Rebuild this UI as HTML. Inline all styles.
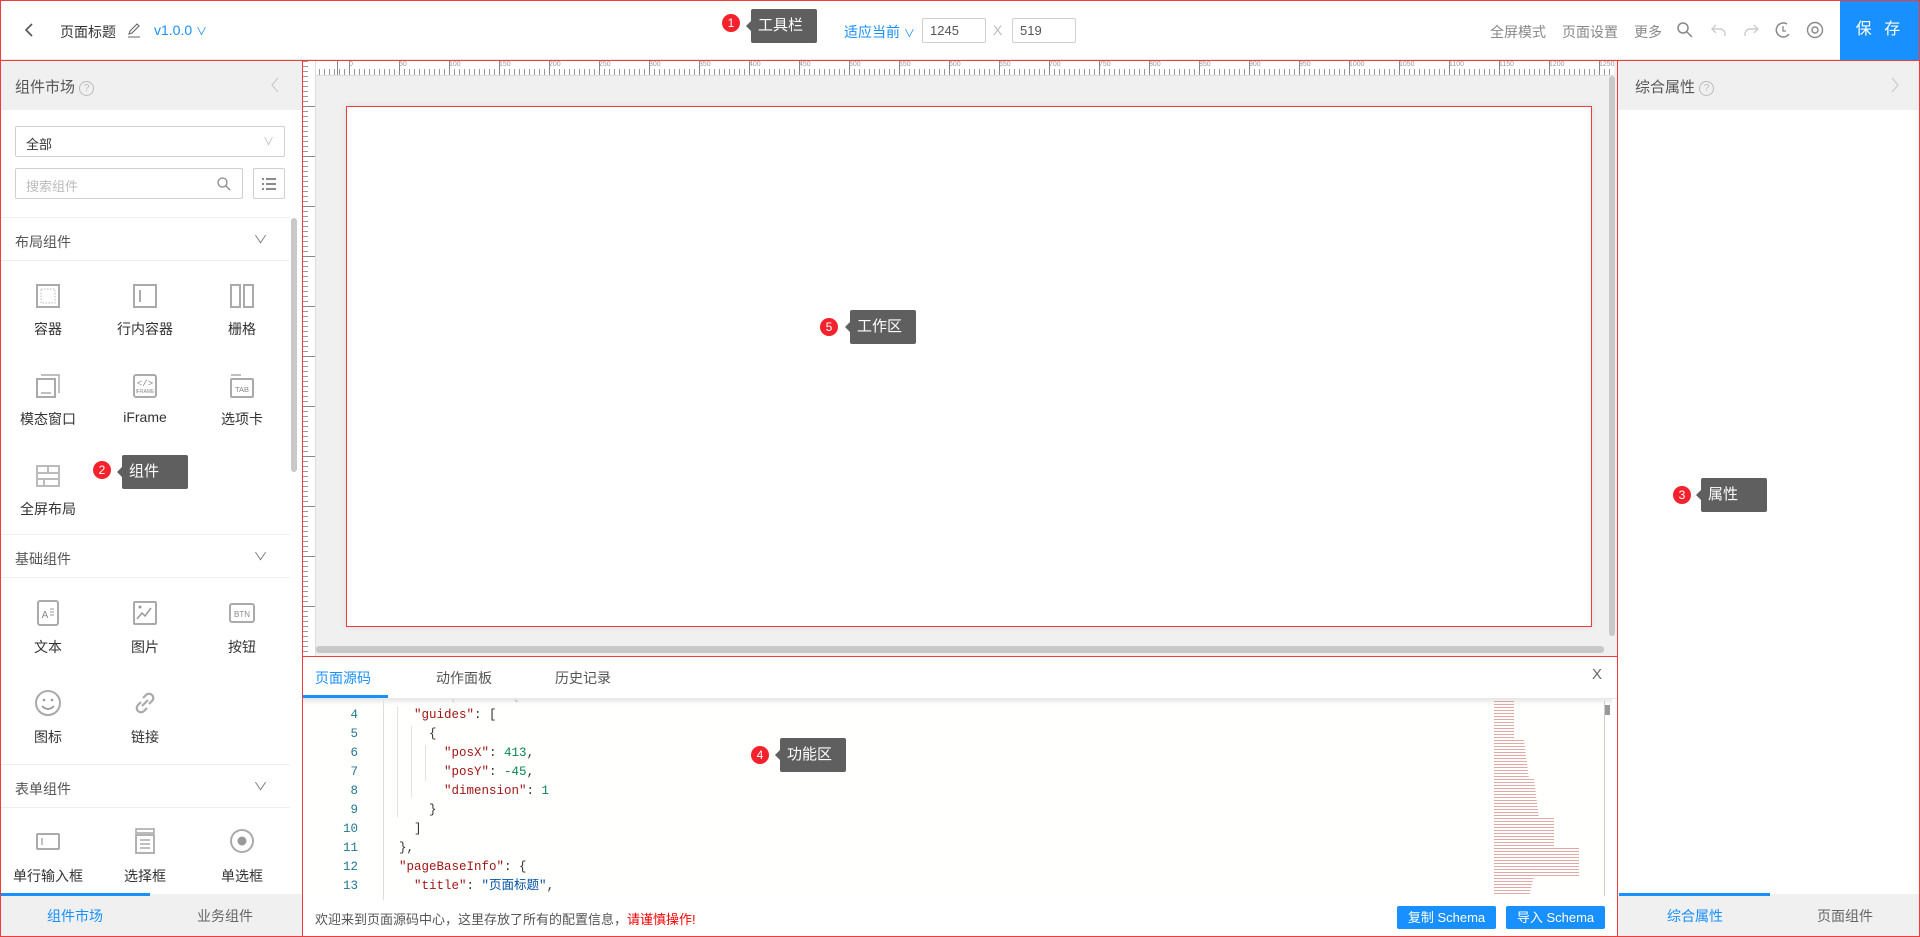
<!DOCTYPE html>
<html><head><meta charset="utf-8"><style>
*{box-sizing:border-box;margin:0;padding:0}
body{width:1920px;height:937px;position:relative;overflow:hidden;background:#fff;font-family:"Liberation Sans","Noto Sans CJK SC",sans-serif;font-size:14px;color:#333}
.a{position:absolute}
.rb{position:absolute;border:1px solid #f03c3c;pointer-events:none;z-index:20}
.blue{color:#1890ff}
.ic{position:absolute;width:28px;height:28px}
.lbl{position:absolute;width:96px;text-align:center;font-size:14px;color:#333}
.sec{position:absolute;left:0;width:290px;height:44px;border-top:1px solid #eee;border-bottom:1px solid #eee;font-size:14px;color:#555;padding:14px 0 0 15px}
.sec span{position:absolute;right:24px;top:13px;color:#777;font-size:11px;transform:scaleX(1.3)}
.tip{position:absolute;background:#5f5f5f;color:#fff;font-size:15px;border-radius:2px;height:34px;line-height:34px;padding-left:7px;width:66px;z-index:25}
.tip:before{content:"";position:absolute;left:-5px;top:12px;border-right:5px solid #5f5f5f;border-top:5px solid transparent;border-bottom:5px solid transparent}
.num{position:absolute;width:18px;height:18px;border-radius:50%;background:#f5222d;color:#fff;font-size:12px;text-align:center;line-height:18px;z-index:25}
.code{position:absolute;font-family:"Liberation Mono",monospace;font-size:12.5px;line-height:19px;white-space:pre}
.ln{position:absolute;width:60px;text-align:right;left:298px;font-family:"Liberation Mono",monospace;font-size:12.5px;color:#237893;line-height:19px}
.k{color:#a31515}.n{color:#098658}.s{color:#0451a5}
.btn{position:absolute;background:#1890ff;color:#fff;font-size:13px;text-align:center;height:23px;line-height:23px;border-radius:2px}
</style></head><body>

<!-- toolbar -->
<div class="a" style="left:0;top:0;width:1920px;height:60px;background:#fff;border-bottom:1px solid #e8e8e8"></div>
<svg class="a" style="left:23px;top:22px" width="12" height="16"><path d="M9 2L3 8l6 6" stroke="#555" stroke-width="1.6" fill="none"/></svg>
<div class="a" style="left:60px;top:22px;font-size:14px;color:#333">页面标题</div>
<svg class="a" style="left:126px;top:22px" width="16" height="16"><path d="M3 12l1-3 7-7 2 2-7 7z M2 15h12" stroke="#666" stroke-width="1.1" fill="none"/></svg>
<div class="a blue" style="left:154px;top:22px;font-size:14px">v1.0.0 <span style="font-size:11px">∨</span></div>
<div class="num" style="left:722px;top:14px">1</div>
<div class="tip" style="left:751px;top:9px">工具栏</div>
<div class="a blue" style="left:844px;top:22px;font-size:14px">适应当前 <span style="font-size:11px">∨</span></div>
<div class="a" style="left:922px;top:18px;width:64px;height:25px;border:1px solid #d0d0d0;border-radius:2px;padding:4px 7px;font-size:13px;color:#555">1245</div>
<div class="a" style="left:993px;top:22px;color:#bbb;font-size:14px">X</div>
<div class="a" style="left:1012px;top:18px;width:64px;height:25px;border:1px solid #d0d0d0;border-radius:2px;padding:4px 7px;font-size:13px;color:#555">519</div>
<div class="a" style="left:1490px;top:22px;color:#888;font-size:14px">全屏模式</div>
<div class="a" style="left:1562px;top:22px;color:#888;font-size:14px">页面设置</div>
<div class="a" style="left:1634px;top:22px;color:#888;font-size:14px">更多</div>
<svg class="a" style="left:1676px;top:21px" width="18" height="18"><circle cx="7" cy="7" r="5" stroke="#888" stroke-width="1.5" fill="none"/><path d="M11 11l5 5" stroke="#888" stroke-width="1.5"/></svg>
<svg class="a" style="left:1710px;top:21px" width="18" height="18"><path d="M6 4L2 8l4 4M2 8h8a5 5 0 0 1 5 5v2" stroke="#ccc" stroke-width="1.4" fill="none"/></svg>
<svg class="a" style="left:1742px;top:21px" width="18" height="18"><path d="M12 4l4 4-4 4M16 8H8a5 5 0 0 0-5 5v2" stroke="#ccc" stroke-width="1.4" fill="none"/></svg>
<svg class="a" style="left:1774px;top:20px" width="18" height="20"><path d="M13 4A7 7 0 1 0 15 14" stroke="#888" stroke-width="1.5" fill="none"/><path d="M9 6v5h3" stroke="#888" stroke-width="1.3" fill="none"/></svg>
<svg class="a" style="left:1806px;top:21px" width="18" height="18"><circle cx="9" cy="9" r="7.5" stroke="#888" stroke-width="1.4" fill="none"/><circle cx="9" cy="9" r="3" stroke="#888" stroke-width="1.4" fill="none"/></svg>
<div class="a" style="left:1840px;top:0;width:80px;height:60px;background:#1890ff;color:#fff;font-size:16px;text-align:center;line-height:60px;letter-spacing:4px">保 存</div>

<!-- left panel -->
<div class="a" style="left:0;top:60px;width:302px;height:50px;background:#f0f0f0"></div>
<div class="a" style="left:15px;top:76px;font-size:15px;color:#555">组件市场 <span style="display:inline-block;width:15px;height:15px;border:1px solid #bbb;border-radius:50%;font-size:10px;text-align:center;line-height:13px;color:#bbb;vertical-align:1px">?</span></div>
<svg class="a" style="left:270px;top:77px" width="10" height="16"><path d="M8 1L2 8l6 7" stroke="#ccc" stroke-width="1.3" fill="none"/></svg>
<div class="a" style="left:15px;top:126px;width:270px;height:31px;border:1px solid #d0d0d0;border-radius:2px;padding:7px 10px;font-size:13px;color:#333">全部<span style="position:absolute;right:10px;top:6px;color:#bbb;font-size:11px">∨</span></div>
<div class="a" style="left:15px;top:168px;width:228px;height:31px;border:1px solid #d0d0d0;border-radius:2px;padding:7px 10px;font-size:13px;color:#bbb">搜索组件</div>
<svg class="a" style="left:216px;top:176px" width="16" height="16"><circle cx="6.5" cy="6.5" r="4.5" stroke="#888" stroke-width="1.3" fill="none"/><path d="M10 10l4 4" stroke="#888" stroke-width="1.3"/></svg>
<div class="a" style="left:253px;top:168px;width:32px;height:31px;border:1px solid #d0d0d0;border-radius:2px"></div>
<svg class="a" style="left:261px;top:176px" width="16" height="16"><path d="M1 3h2M5 3h10M1 8h2M5 8h10M1 13h2M5 13h10" stroke="#666" stroke-width="1.4"/></svg>

<div class="sec" style="top:217px">布局组件<span>∨</span></div>
<svg class="ic" style="left:34px;top:282px"><rect x="3" y="3" width="22" height="22" stroke="#aaa" stroke-width="2" fill="none"/><rect x="7" y="7" width="14" height="14" stroke="#bbb" stroke-dasharray="1.5 1.5" fill="none"/></svg>
<svg class="ic" style="left:131px;top:282px"><rect x="3" y="3" width="22" height="22" stroke="#aaa" stroke-width="2" fill="none"/><path d="M9 8v12" stroke="#aaa" stroke-width="2"/></svg>
<svg class="ic" style="left:228px;top:282px"><rect x="3" y="3" width="9" height="22" stroke="#aaa" stroke-width="2" fill="none"/><rect x="16" y="3" width="9" height="22" stroke="#aaa" stroke-width="2" fill="none"/></svg>
<div class="lbl" style="left:0;top:319px">容器</div>
<div class="lbl" style="left:97px;top:319px">行内容器</div>
<div class="lbl" style="left:194px;top:319px">栅格</div>
<svg class="ic" style="left:34px;top:372px"><rect x="3" y="7" width="18" height="18" stroke="#aaa" stroke-width="2" fill="none"/><path d="M7 3h18v18" stroke="#aaa" stroke-width="1.5" fill="none"/><path d="M7 21h10" stroke="#aaa" stroke-width="1.5"/></svg>
<svg class="ic" style="left:131px;top:372px"><rect x="3" y="3" width="22" height="22" rx="2" stroke="#aaa" stroke-width="2" fill="none"/><text x="14" y="14" font-size="9" text-anchor="middle" fill="#888" font-family="Liberation Mono">&lt;/&gt;</text><text x="14" y="21" font-size="5" text-anchor="middle" fill="#888" font-family="Liberation Sans">IFRAME</text></svg>
<svg class="ic" style="left:228px;top:372px"><path d="M3 3h10" stroke="#aaa" stroke-width="1.5"/><rect x="3" y="7" width="22" height="18" rx="1" stroke="#aaa" stroke-width="2" fill="none"/><text x="14" y="20" font-size="7.5" text-anchor="middle" fill="#888" font-family="Liberation Sans">TAB</text></svg>
<div class="lbl" style="left:0;top:409px">模态窗口</div>
<div class="lbl" style="left:97px;top:409px">iFrame</div>
<div class="lbl" style="left:194px;top:409px">选项卡</div>
<svg class="ic" style="left:34px;top:462px"><rect x="3" y="4" width="22" height="20" stroke="#bbb" stroke-width="2" fill="none"/><path d="M3 11h22M14 4v7M3 17h22M10 17v7" stroke="#bbb" stroke-width="2"/></svg>
<div class="lbl" style="left:0;top:499px">全屏布局</div>
<div class="num" style="left:93px;top:461px">2</div>
<div class="tip" style="left:122px;top:455px">组件</div>

<div class="sec" style="top:534px">基础组件<span>∨</span></div>
<svg class="ic" style="left:34px;top:599px"><rect x="4" y="2" width="20" height="24" rx="2" stroke="#aaa" stroke-width="2" fill="none"/><text x="11" y="19" font-size="10" text-anchor="middle" fill="#888" font-family="Liberation Sans">A</text><path d="M16 10h4M16 13h4M16 16h4" stroke="#999"/></svg>
<svg class="ic" style="left:131px;top:599px"><rect x="3" y="3" width="22" height="22" rx="1" stroke="#aaa" stroke-width="2" fill="none"/><path d="M6 20l5-6 3 3 6-8" stroke="#999" stroke-width="1.5" fill="none"/><circle cx="9" cy="8" r="1.5" fill="#999"/></svg>
<svg class="ic" style="left:228px;top:599px"><rect x="2" y="5" width="24" height="18" rx="2" stroke="#aaa" stroke-width="2" fill="none"/><text x="14" y="18" font-size="8" text-anchor="middle" fill="#888" font-family="Liberation Sans">BTN</text></svg>
<div class="lbl" style="left:0;top:637px">文本</div>
<div class="lbl" style="left:97px;top:637px">图片</div>
<div class="lbl" style="left:194px;top:637px">按钮</div>
<svg class="ic" style="left:34px;top:689px"><circle cx="14" cy="14" r="12" stroke="#aaa" stroke-width="2" fill="none"/><circle cx="10" cy="11" r="1.3" fill="#999"/><circle cx="18" cy="11" r="1.3" fill="#999"/><path d="M8 17q6 6 12 0" stroke="#999" stroke-width="1.8" fill="none"/></svg>
<svg class="ic" style="left:131px;top:689px"><path d="M12 9l3-3a4 4 0 0 1 6 6l-3 3M16 19l-3 3a4 4 0 0 1-6-6l3-3M11 17l6-6" stroke="#aaa" stroke-width="2.2" fill="none"/></svg>
<div class="lbl" style="left:0;top:727px">图标</div>
<div class="lbl" style="left:97px;top:727px">链接</div>

<div class="sec" style="top:764px">表单组件<span>∨</span></div>
<svg class="ic" style="left:34px;top:827px"><rect x="3" y="7" width="22" height="15" rx="1" stroke="#aaa" stroke-width="2" fill="none"/><path d="M8 11v7" stroke="#aaa" stroke-width="1.5"/></svg>
<svg class="ic" style="left:131px;top:827px"><rect x="5" y="2" width="18" height="4" stroke="#aaa" stroke-width="1.6" fill="none"/><rect x="5" y="8" width="18" height="18" stroke="#aaa" stroke-width="1.8" fill="none"/><path d="M9 13h10M9 17h10M9 21h10" stroke="#aaa" stroke-width="1.5"/></svg>
<svg class="ic" style="left:228px;top:827px"><circle cx="14" cy="14" r="11" stroke="#aaa" stroke-width="2" fill="none"/><circle cx="14" cy="14" r="4.5" fill="#999"/></svg>
<div class="lbl" style="left:0;top:866px">单行输入框</div>
<div class="lbl" style="left:97px;top:866px">选择框</div>
<div class="lbl" style="left:194px;top:866px">单选框</div>

<div class="a" style="left:291px;top:218px;width:6px;height:254px;background:#c8c8c8;border-radius:3px"></div>
<div class="a" style="left:0;top:894px;width:302px;height:43px;background:#f0f0f0"></div>
<div class="a" style="left:0;top:893px;width:150px;height:3px;background:#1890ff"></div>
<div class="a blue" style="left:47px;top:906px;font-size:14px">组件市场</div>
<div class="a" style="left:197px;top:906px;font-size:14px;color:#666">业务组件</div>

<!-- canvas -->
<div class="a" style="left:302px;top:60px;width:1315px;height:596px;background:#f0f0f0"></div>
<div class="a" style="left:302px;top:60px;width:1312px;height:16px;background:#fff;border-bottom:1px solid #ddd;
background-image:repeating-linear-gradient(90deg,#888 0 1px,transparent 1px 50px),repeating-linear-gradient(90deg,#999 0 1px,transparent 1px 5px);
background-size:100% 16px,100% 7px;background-position:47px 0,2px 9px;background-repeat:repeat-x"></div>
<div class="a" style="left:302px;top:60px;width:14px;height:596px;background:#fff;border-right:1px solid #ddd;
background-image:repeating-linear-gradient(180deg,#888 0 1px,transparent 1px 50px),repeating-linear-gradient(180deg,#999 0 1px,transparent 1px 5px);
background-size:14px 100%,6px 100%;background-position:0 46px,0 1px;background-repeat:repeat-y"></div>
<div class="a" style="left:302px;top:60px;width:1314px;height:16px;font-size:7px;color:#999;overflow:hidden;white-space:nowrap">
<span style="position:absolute;left:47px;top:1px">0</span><span style="position:absolute;left:97px;top:1px">50</span><span style="position:absolute;left:147px;top:1px">100</span><span style="position:absolute;left:197px;top:1px">150</span><span style="position:absolute;left:247px;top:1px">200</span><span style="position:absolute;left:297px;top:1px">250</span><span style="position:absolute;left:347px;top:1px">300</span><span style="position:absolute;left:397px;top:1px">350</span><span style="position:absolute;left:447px;top:1px">400</span><span style="position:absolute;left:497px;top:1px">450</span><span style="position:absolute;left:547px;top:1px">500</span><span style="position:absolute;left:597px;top:1px">550</span><span style="position:absolute;left:647px;top:1px">600</span><span style="position:absolute;left:697px;top:1px">650</span><span style="position:absolute;left:747px;top:1px">700</span><span style="position:absolute;left:797px;top:1px">750</span><span style="position:absolute;left:847px;top:1px">800</span><span style="position:absolute;left:897px;top:1px">850</span><span style="position:absolute;left:947px;top:1px">900</span><span style="position:absolute;left:997px;top:1px">950</span><span style="position:absolute;left:1047px;top:1px">1000</span><span style="position:absolute;left:1097px;top:1px">1050</span><span style="position:absolute;left:1147px;top:1px">1100</span><span style="position:absolute;left:1197px;top:1px">1150</span><span style="position:absolute;left:1247px;top:1px">1200</span><span style="position:absolute;left:1297px;top:1px">1250</span></div>
<div class="a" style="left:346px;top:106px;width:1246px;height:521px;background:#fff;border:1px solid #f03c3c;box-shadow:0 0 6px rgba(0,0,0,.08)"></div>
<div class="num" style="left:820px;top:318px">5</div>
<div class="tip" style="left:850px;top:310px">工作区</div>
<div class="a" style="left:1609px;top:76px;width:6px;height:560px;background:#c8c8c8;border-radius:3px"></div>
<div class="a" style="left:316px;top:646px;width:1288px;height:7px;background:#c8c8c8;border-radius:3px"></div>

<!-- bottom panel -->
<div class="a" style="left:302px;top:656px;width:1315px;height:281px;background:#fff"></div>
<div class="a" style="left:302px;top:698px;width:1315px;height:1px;background:#e8e8e8"></div>
<div class="a blue" style="left:315px;top:668px;font-size:14px">页面源码</div>
<div class="a" style="left:302px;top:695px;width:86px;height:3px;background:#1890ff"></div>
<div class="a" style="left:436px;top:668px;font-size:14px;color:#555">动作面板</div>
<div class="a" style="left:555px;top:668px;font-size:14px;color:#555">历史记录</div>
<div class="a" style="left:1592px;top:666px;font-size:15px;color:#666">X</div>
<div class="a" style="left:302px;top:699px;width:1310px;height:201px;background:#fffffe;overflow:hidden">
<div class="a" style="left:81px;top:0;width:1px;height:201px;background:#ddd"></div>
<div class="a" style="left:95px;top:8px;width:1px;height:110px;background:#e3e3e3"></div>
<div class="a" style="left:109px;top:27px;width:1px;height:72px;background:#e3e3e3"></div>
<div class="a" style="left:123px;top:46px;width:1px;height:36px;background:#e3e3e3"></div>
<div class="ln" style="left:-4px;top:-12px">3<br>4<br>5<br>6<br>7<br>8<br>9<br>10<br>11<br>12<br>13</div>
<div class="code" style="left:97px;top:-12px"><span class="k">"developInfo"</span>: {
  <span class="k">"guides"</span>: [
    {
      <span class="k">"posX"</span>: <span class="n">413</span>,
      <span class="k">"posY"</span>: <span class="n">-45</span>,
      <span class="k">"dimension"</span>: <span class="n">1</span>
    }
  ]
},
<span class="k">"pageBaseInfo"</span>: {
  <span class="k">"title"</span>: <span class="s">"页面标题"</span>,</div>
<div class="a" style="left:0;top:0;width:1310px;height:6px;background:linear-gradient(#e8e8e8,rgba(255,255,255,0))"></div>
<div class="a" style="left:1192px;top:2px;width:100px;height:195px;background:repeating-linear-gradient(180deg,rgba(200,80,80,.5) 0 1px,transparent 1px 3px);clip-path:polygon(0 0,20% 0,20% 20%,30% 20%,35% 40%,40% 40%,45% 60%,60% 60%,60% 75%,85% 75%,85% 90%,40% 90%,35% 100%,0 100%)"></div>
<div class="a" style="left:1302px;top:2px;width:6px;height:195px;border-left:1px solid #ccc"></div>
<div class="a" style="left:1303px;top:6px;width:5px;height:10px;background:#999"></div>
</div>
<div class="num" style="left:751px;top:746px">4</div>
<div class="tip" style="left:780px;top:738px">功能区</div>
<div class="a" style="left:315px;top:909px;font-size:13px;color:#555">欢迎来到页面源码中心，这里存放了所有的配置信息，<span style="color:#f00">请谨慎操作!</span></div>
<div class="btn" style="left:1397px;top:906px;width:99px">复制 Schema</div>
<div class="btn" style="left:1506px;top:906px;width:99px">导入 Schema</div>

<!-- right panel -->
<div class="a" style="left:1617px;top:60px;width:303px;height:50px;background:#f0f0f0"></div>
<div class="a" style="left:1635px;top:76px;font-size:15px;color:#555">综合属性 <span style="display:inline-block;width:15px;height:15px;border:1px solid #bbb;border-radius:50%;font-size:10px;text-align:center;line-height:13px;color:#bbb;vertical-align:1px">?</span></div>
<svg class="a" style="left:1890px;top:77px" width="10" height="16"><path d="M2 1l6 7-6 7" stroke="#ccc" stroke-width="1.3" fill="none"/></svg>
<div class="num" style="left:1673px;top:486px">3</div>
<div class="tip" style="left:1701px;top:478px">属性</div>
<div class="a" style="left:1617px;top:894px;width:303px;height:43px;background:#f0f0f0"></div>
<div class="a" style="left:1619px;top:893px;width:151px;height:3px;background:#1890ff"></div>
<div class="a blue" style="left:1667px;top:906px;font-size:14px">综合属性</div>
<div class="a" style="left:1817px;top:906px;font-size:14px;color:#666">页面组件</div>

<!-- red outlines -->
<div class="rb" style="left:0;top:0;width:1920px;height:61px"></div>
<div class="rb" style="left:0;top:60px;width:303px;height:877px"></div>
<div class="rb" style="left:302px;top:60px;width:1316px;height:597px"></div>
<div class="rb" style="left:302px;top:656px;width:1316px;height:281px"></div>
<div class="rb" style="left:1617px;top:60px;width:303px;height:877px"></div>
</body></html>
